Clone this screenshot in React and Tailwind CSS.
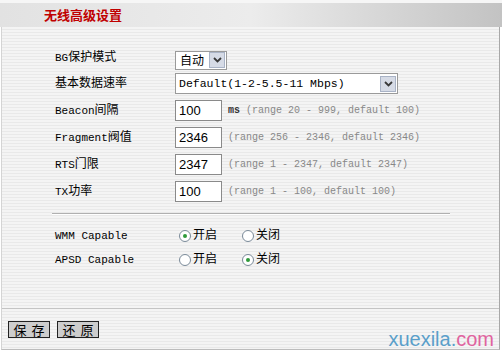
import React from 'react';

const cjk = "font-['Liberation_Mono','Noto_Sans_CJK_SC',monospace]";

const Lat = ({ children }) => (
  <span className="font-['Liberation_Mono',monospace] text-[11px]">{children}</span>
);

const Arrow = () => (
  <span className="flex items-center justify-center w-[16px] h-[16px] bg-[#d6dbe6] border border-[#a9b3c6] ml-auto mr-[1px]">
    <svg width="9" height="6" viewBox="0 0 9 6">
      <path d="M1 1 L4.5 4.5 L8 1" stroke="#3a3a3a" strokeWidth="1.8" fill="none" />
    </svg>
  </span>
);

const Radio = ({ checked }) => (
  <span className="relative inline-flex items-center justify-center w-[12px] h-[12px] rounded-full border border-[#7a8a99] bg-white">
    {checked && <span className="w-[4px] h-[4px] rounded-full bg-[#2f9a3a]" />}
  </span>
);

const Row = ({ label, children, h = 'h-[27px]' }) => (
  <div className={`flex items-center ${h}`}>
    <div className={`w-[120px] text-[12px] text-black ${cjk}`}>{label}</div>
    <div className="flex items-center">{children}</div>
  </div>
);

const Input = ({ value }) => (
  <div className="w-[47px] h-[21px] bg-white border border-[#8a8a8a] flex items-center pl-[3px] text-[13px] text-black font-['Liberation_Sans',sans-serif]">
    {value}
  </div>
);

const Hint = ({ children }) => (
  <span className="ml-[6px] text-[10px] text-[#888] font-['Liberation_Mono',monospace]">{children}</span>
);

const RadioPair = ({ on }) => (
  <div className={`flex items-center text-[12px] text-black ${cjk}`}>
    <span className="flex items-center gap-[2px] w-[63px]"><Radio checked={on} />开启</span>
    <span className="flex items-center gap-[2px]"><Radio checked={!on} />关闭</span>
  </div>
);

const Btn = ({ a, b }) => (
  <button className="w-[42px] h-[17px] bg-[#cdcdcd] border border-[#222] text-[13px] leading-none text-black font-['Noto_Sans_CJK_SC',sans-serif] flex items-center justify-center gap-[5px]">
    <span>{a}</span><span>{b}</span>
  </button>
);

export default function App() {
  return (
    <div className="relative w-[502px] h-[352px] bg-white overflow-hidden flex flex-col">
      <div className="h-[3px] bg-[#f6f6f6]" />
      <div className="h-[24px] bg-linear-to-r from-[#e2e2e2] via-[#ececec] to-[#c3c3c3] flex items-center pl-[44px]">
        <span className="text-[13px] font-bold text-[#c00000] font-['Noto_Sans_CJK_SC',sans-serif]">无线高级设置</span>
      </div>
      <div className="ml-[1px] w-[499px] h-[323px] border-l border-r border-b border-l-[#d4d4d4] border-r-[#a8a8a8] border-b-[#bdbdbd] bg-[repeating-linear-gradient(180deg,#f4f4f4_0px,#f4f4f4_2px,#e9e9e9_2px,#e9e9e9_3px)] flex flex-col">
        <div className="pl-[53px] pt-[19px]">
          <Row label={<><Lat>BG</Lat>保护模式</>} h="h-[24px]">
            <div className="w-[52px] h-[19px] mt-[4px] bg-white border border-[#9a9a9a] flex items-center pl-[4px] text-[12px] font-['Noto_Sans_CJK_SC',sans-serif]">
              自动<Arrow />
            </div>
          </Row>
          <Row label="基本数据速率">
            <div className="w-[223px] h-[21px] bg-white border border-[#9a9a9a] flex items-center pl-[3px] text-[11.5px] font-['Liberation_Mono',monospace] text-black">
              Default(1-2-5.5-11 Mbps)<Arrow />
            </div>
          </Row>
          <Row label={<><Lat>Beacon</Lat>间隔</>}>
            <Input value="100" />
            <span className="ml-[6px] text-[10px] font-bold text-[#333] font-['Liberation_Mono',monospace]">ms</span>
            <Hint>(range 20 - 999, default 100)</Hint>
          </Row>
          <Row label={<><Lat>Fragment</Lat>阀值</>}>
            <Input value="2346" />
            <Hint>(range 256 - 2346, default 2346)</Hint>
          </Row>
          <Row label={<><Lat>RTS</Lat>门限</>}>
            <Input value="2347" />
            <Hint>(range 1 - 2347, default 2347)</Hint>
          </Row>
          <Row label={<><Lat>TX</Lat>功率</>}>
            <Input value="100" />
            <Hint>(range 1 - 100, default 100)</Hint>
          </Row>
        </div>
        <div className="ml-[50px] w-[398px] mt-[8px] h-[2px] border-t border-[#b0b0b0] border-b-white border-b" />
        <div className="pl-[53px] pt-[9px]">
          <Row label={<Lat>WMM Capable</Lat>} h="h-[24px]">
            <div className="pl-[4px]"><RadioPair on /></div>
          </Row>
          <Row label={<Lat>APSD Capable</Lat>} h="h-[24px]">
            <div className="pl-[4px]"><RadioPair on={false} /></div>
          </Row>
        </div>
        <div className="mt-auto h-[41px] border-t border-[#c4c4c4] flex items-start pt-[12px] pl-[6px] gap-[7px]">
          <Btn a="保" b="存" />
          <Btn a="还" b="原" />
        </div>
      </div>
      <div className="absolute right-[8px] bottom-[3px] text-[20px] leading-none font-['Liberation_Sans',sans-serif]">
        <span className="text-[#5a9fca]">xuexila.</span><span className="text-[#e0639f]">com</span>
      </div>
    </div>
  );
}
